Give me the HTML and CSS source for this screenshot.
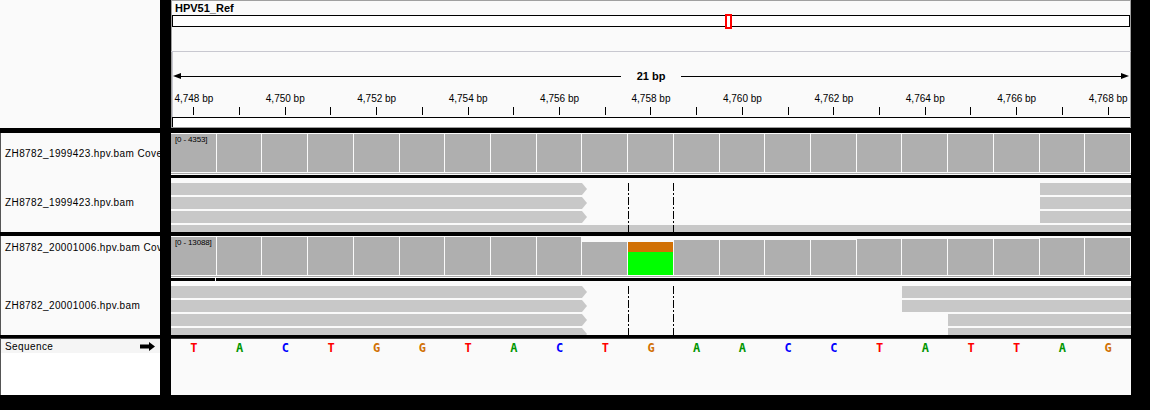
FILE: index.html
```html
<!DOCTYPE html>
<html lang="en">
<head>
  <meta charset="UTF-8">
  <title>IGV - HPV51_Ref</title>
  <link rel="stylesheet" href="styles.css">
</head>
<body>
  <div class="igv">
    <div class="name-head"></div>

    <div class="ruler-head">
      <div class="genome">HPV51_Ref</div>
      <div class="chrom"><span class="chrom-mark"></span></div>
      <div class="ruler">
        <div class="span-row">
          <i class="tip tip-left"></i>
          <b class="span-line"></b>
          <span class="span-label">21 bp</span>
          <b class="span-line"></b>
          <i class="tip tip-right"></i>
        </div>
        <div class="tick-labels" id="tickLabels"></div>
        <div class="ticks" id="ticks"></div>
        <div class="ruler-box"></div>
      </div>
    </div>

    <!-- first bam -->
    <div class="names track1">
      <div class="name cov-name">ZH8782_1999423.hpv.bam Coverage</div>
      <div class="name aln-name">ZH8782_1999423.hpv.bam</div>
    </div>
    <div class="data track1">
      <div class="coverage">
        <span class="range">[0 - 4353]</span>
        <div class="bars" data-heights="38,38,38,38,38,38,38,38,38,38,38,38,38,38,38,38,38,38,38,38,38"></div>
      </div>
      <div class="cov-sep"></div>
      <div class="split"></div>
      <div class="alignments">
        <div class="read-row"><span class="read fwd left"></span><span class="read r19"></span></div>
        <div class="read-row"><span class="read fwd left"></span><span class="read r19"></span></div>
        <div class="read-row"><span class="read fwd left"></span><span class="read r19"></span></div>
        <div class="read-row"><span class="read full"></span></div>
        <div class="mm mm-a"></div>
        <div class="mm mm-b"></div>
      </div>
    </div>

    <!-- second bam -->
    <div class="names track2">
      <div class="name cov-name">ZH8782_20001006.hpv.bam Coverage</div>
      <div class="name aln-name">ZH8782_20001006.hpv.bam</div>
    </div>
    <div class="data track2">
      <div class="coverage">
        <span class="range">[0 - 13088]</span>
        <div class="bars" data-heights="38,38,38,38,38,38,38,38,38,33,33,35,35,35,35,36,36,36,36,37,37" data-snp="10"></div>
      </div>
      <div class="cov-sep"></div>
      <div class="split notch"></div>
      <div class="alignments">
        <div class="read-row"><span class="read fwd left"></span><span class="read r16"></span></div>
        <div class="read-row"><span class="read fwd left"></span><span class="read r16"></span></div>
        <div class="read-row"><span class="read fwd left"></span><span class="read r17"></span></div>
        <div class="read-row"><span class="read fwd left"></span><span class="read r17"></span></div>
        <div class="mm mm-a"></div>
        <div class="mm mm-b"></div>
      </div>
    </div>

    <!-- reference sequence -->
    <div class="names seq">
      <div class="seq-name">
        <span>Sequence</span>
        <svg width="15" height="9" viewBox="0 0 15 9"><rect x="0" y="2.5" width="9" height="4" fill="#000"/><polygon points="9,0 15,4.5 9,9" fill="#000"/></svg>
      </div>
    </div>
    <div class="data seq">
      <div class="bases" id="bases"></div>
    </div>
  </div>

<script>
  const seq = "TACTGGTACTGAACCTATTAG";
  const start = 748;

  const tickLabels = document.getElementById("tickLabels");
  const ticks = document.getElementById("ticks");
  const bases = document.getElementById("bases");

  for (let i = 0; i < seq.length; i++) {
    const label = document.createElement("span");
    if (i % 2 === 0) label.textContent = `4,${start + i} bp`;
    tickLabels.appendChild(label);

    ticks.appendChild(document.createElement("span"));

    const b = document.createElement("span");
    b.className = "base base-" + seq[i];
    b.textContent = seq[i];
    bases.appendChild(b);
  }

  // coverage bars, heights out of 38px
  document.querySelectorAll(".bars").forEach(bars => {
    const snp = bars.dataset.snp ? parseInt(bars.dataset.snp) : -1;
    bars.dataset.heights.split(",").forEach((h, i) => {
      const bar = document.createElement("span");
      bar.className = i === snp ? "bar snp" : "bar";
      bar.style.height = (parseInt(h) / 38 * 100) + "%";
      bars.appendChild(bar);
    });
  });
</script>
</body>
</html>
```

FILE: styles.css
```css
body {
  margin: 0;
  background: #000;
  font-family: "Liberation Sans", Arial, sans-serif;
  width: 1150px;
  height: 410px;
  overflow: hidden;
}

.igv {
  display: grid;
  grid-template-columns: 160px 960px;
  grid-template-rows: 128px 5px 99px 4px 99px 3px 57px;
  column-gap: 11px;
}

.name-head,
.names {
  grid-column: 1;
}

.ruler-head,
.data {
  grid-column: 2;
}

.name-head,
.ruler-head {
  grid-row: 1;
}

.track1 {
  grid-row: 3;
}

.track2 {
  grid-row: 5;
}

.seq {
  grid-row: 7;
}

/* header */

.name-head {
  background: #fafafa;
}

.ruler-head {
  background: #fafafa;
  box-shadow: inset 0 0 0 1px #a0a0a0;
  padding-top: 1px;
}

.genome {
  height: 14px;
  line-height: 14px;
  padding-left: 4px;
  font-size: 11px;
  font-weight: bold;
  color: #000;
}

.chrom {
  position: relative;
  height: 12px;
  box-sizing: border-box;
  margin: 0 1px;
  border: 1px solid #000;
  background: #fff;
}

.chrom-mark {
  position: absolute;
  left: 552px;
  top: -2px;
  width: 7px;
  height: 15px;
  box-sizing: border-box;
  border: 2px solid #ff0000;
  background: #fff;
}

.ruler {
  height: 76px;
  box-sizing: border-box;
  margin-top: 24px;
  border-top: 1px solid #c8c8d0;
  background: linear-gradient(to right, transparent 1px, #c8c8d0 1px, #c8c8d0 2px, transparent 2px);
}

.span-row {
  display: flex;
  align-items: center;
  height: 12px;
  margin-top: 18px;
  padding: 0 2px;
}

.tip {
  width: 0;
  height: 0;
  border-top: 3px solid transparent;
  border-bottom: 3px solid transparent;
}

.tip-left {
  border-right: 8px solid #000;
}

.tip-right {
  border-left: 8px solid #000;
}

.span-line {
  flex: 1;
  height: 1px;
  background: #000;
}

.span-label {
  padding: 0 16px;
  font-size: 11px;
  font-weight: bold;
  line-height: 12px;
}

.tick-labels,
.ticks,
.bars,
.read-row,
.bases {
  display: grid;
  grid-template-columns: repeat(21, 1fr);
}

.tick-labels {
  height: 12px;
  margin-top: 11px;
  font-size: 10px;
  line-height: 12px;
  color: #000;
}

.tick-labels span {
  justify-self: center;
  white-space: nowrap;
}

.ticks {
  height: 8px;
  margin-top: 2px;
}

.ticks span {
  background: linear-gradient(#000, #000) center / 1px 100% no-repeat;
}

.ruler-box {
  height: 10px;
  box-sizing: border-box;
  margin: 2px 1px 0;
  border-top: 1px solid #000;
  border-left: 1px solid #000;
  background: #fff;
}

/* track names */

.names {
  background: #fafafa;
  border-left: 1px solid #555;
  overflow: hidden;
}

.name {
  height: 12px;
  line-height: 12px;
  padding-left: 4px;
  font-size: 10px;
  letter-spacing: 0.4px;
  white-space: nowrap;
  color: #000;
}

.track1 .cov-name {
  margin-top: 15px;
}

.track1 .aln-name {
  margin-top: 37px;
}

.track2 .cov-name {
  margin-top: 6px;
}

.track2 .aln-name {
  margin-top: 46px;
}

.names.seq {
  background: #fff;
  border-top: 1px solid #444;
}

.seq-name {
  display: flex;
  justify-content: space-between;
  align-items: center;
  height: 14px;
  padding: 0 5px 0 4px;
  background: #f5f5f5;
  font-size: 10px;
  letter-spacing: 0.4px;
}

/* data tracks */

.data {
  background: #fafafa;
}

.coverage {
  position: relative;
  padding-top: 1px;
}

.range {
  position: absolute;
  left: 4px;
  top: 3px;
  font-size: 8px;
  line-height: 8px;
  letter-spacing: -0.15px;
  color: #000;
}

.bars {
  height: 38px;
  align-items: end;
}

.bar {
  background: #afafaf;
  margin-right: 1px;
}

.bar.snp {
  background: linear-gradient(#d17105 0, #d17105 10px, #00ff00 10px);
}

.cov-sep {
  height: 3px;
  background: linear-gradient(#fafafa 1px, #a8a8a8 1px, #a8a8a8 2px, #fafafa 2px);
}

.split {
  position: relative;
  height: 3px;
  background: #000;
}

.split.notch::after {
  content: "";
  position: absolute;
  left: 44px;
  top: 0;
  width: 1px;
  height: 3px;
  background: #fafafa;
}

.alignments {
  position: relative;
  height: 54px;
  box-sizing: border-box;
  padding-top: 5px;
  display: flex;
  flex-direction: column;
  gap: 2px;
  overflow: hidden;
}

.read-row {
  flex: none;
  height: 12px;
}

.read {
  background: #c8c8c8;
}

.read.left {
  grid-column: 1 / 10;
}

.read.full {
  grid-column: 1 / 22;
}

.read.r16 {
  grid-column: 17 / 22;
}

.read.r17 {
  grid-column: 18 / 22;
}

.read.r19 {
  grid-column: 20 / 22;
}

.read.fwd {
  position: relative;
}

.read.fwd::after {
  content: "";
  position: absolute;
  right: -5px;
  top: 0;
  border-left: 5px solid #c8c8c8;
  border-top: 6px solid transparent;
  border-bottom: 6px solid transparent;
}

.mm {
  position: absolute;
  top: 5px;
  bottom: 0;
  width: 1px;
  background: repeating-linear-gradient(#000 0, #000 8px, transparent 8px, transparent 10px, #000 10px, #000 12px, transparent 12px, transparent 14px);
}

.mm-a {
  left: calc(100% * 10 / 21);
}

.mm-b {
  left: calc(100% * 11 / 21 - 1px);
}

/* sequence */

.data.seq {
  border-top: 1px solid #3c3c3c;
}

.bases {
  padding-top: 2px;
  font-family: "DejaVu Sans Mono", "Liberation Mono", monospace;
  font-size: 12px;
  font-weight: bold;
  line-height: 14px;
  text-align: center;
}

.base-T {
  color: #ff0000;
}

.base-A {
  color: #009600;
}

.base-C {
  color: #0000ff;
}

.base-G {
  color: #d17105;
}
```
